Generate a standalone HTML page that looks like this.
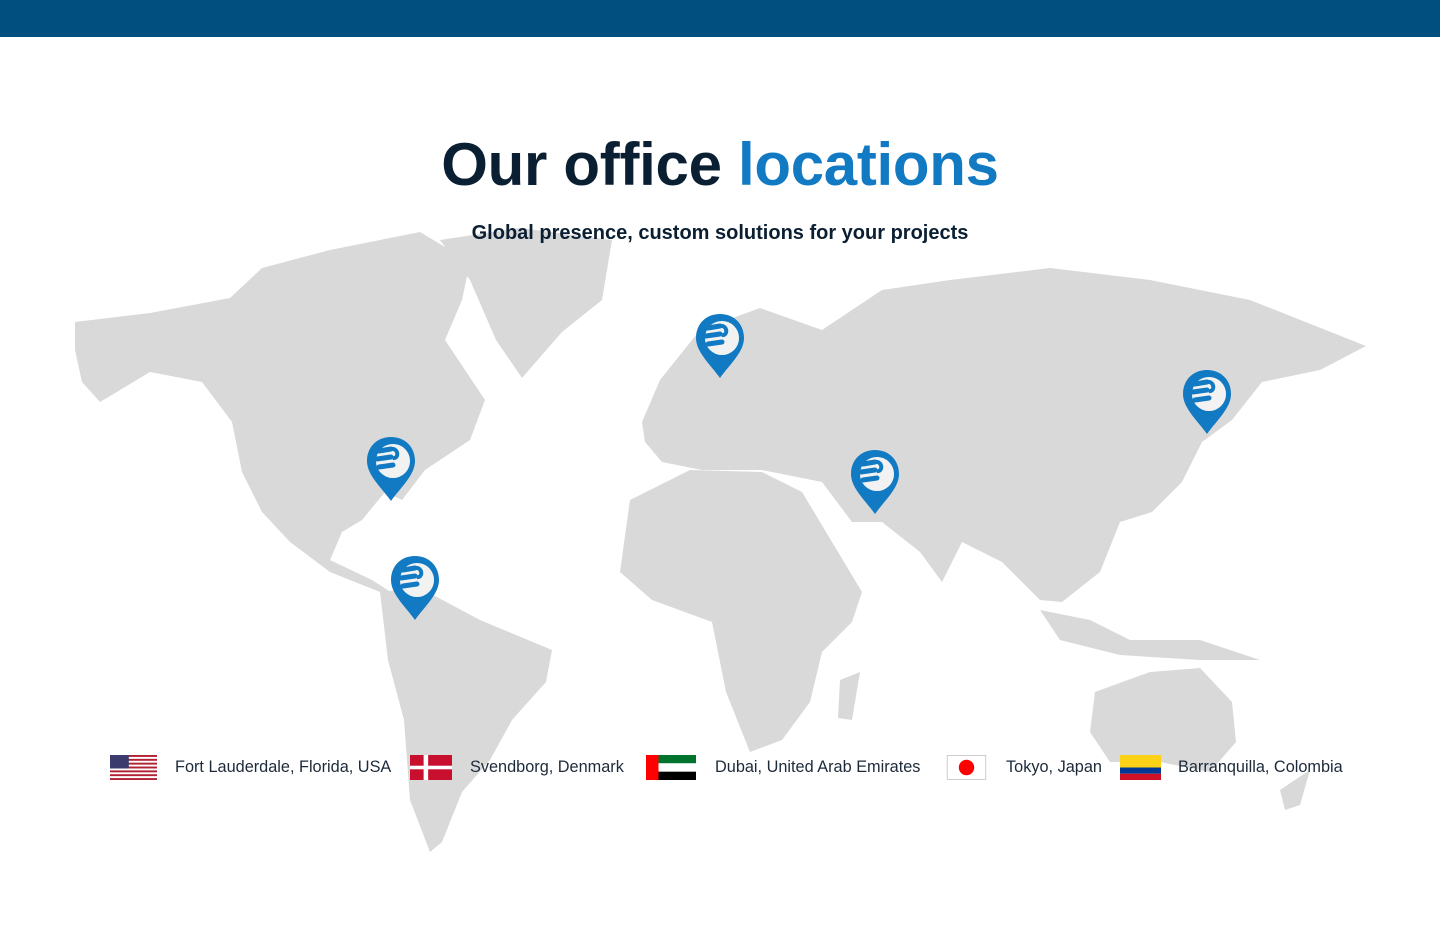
<!DOCTYPE html>
<html><head><meta charset="utf-8"><style>
*{margin:0;padding:0;box-sizing:border-box}
body{width:1440px;height:934px;background:#fff;position:relative;overflow:hidden;font-family:"Liberation Sans",sans-serif}
.top{position:absolute;left:0;top:0;width:1440px;height:37px;background:#014f7f}
h1{position:absolute;top:130px;left:0;width:1440px;text-align:center;font-size:60px;font-weight:700;color:#0b1f33;letter-spacing:-0.3px}
h1 span{color:#127ac2}
.sub{position:absolute;top:222px;left:0;width:1440px;text-align:center;font-size:20px;font-weight:700;color:#0b1f33}
svg.map{position:absolute;left:0;top:0}
.leg{position:absolute;top:754px;font-size:16.3px;color:#1d2a3a;line-height:26px}
.flag{position:absolute;top:755px;height:25px}
</style></head><body>
<div class="top"></div>
<svg class="map" width="1440" height="934" viewBox="0 0 1440 934">
<g fill="#d9d9d9">
<path d="M75 322 L150 313 L230 298 L262 268 L330 250 L420 232 L470 262 L462 300 L445 340 L485 400 L470 440 L425 470 L402 500 L385 492 L362 520 L342 532 L330 560 L372 580 L400 598 L380 592 L330 572 L290 542 L262 512 L242 472 L232 422 L202 382 L150 372 L100 402 L82 382 L75 350Z"/>
<path d="M440 240 L520 228 L612 240 L602 300 L562 332 L522 378 L496 340 L470 280Z"/>
<path d="M380 592 L420 588 L480 620 L552 650 L546 682 L512 720 L490 760 L462 792 L442 842 L430 852 L410 800 L404 720 L388 660Z"/>
<path d="M642 422 L660 380 L700 330 L760 308 L822 330 L882 290 L950 280 L1050 268 L1150 280 L1250 300 L1366 346 L1320 370 L1262 382 L1232 420 L1202 442 L1182 482 L1152 512 L1120 522 L1100 572 L1062 602 L1040 600 L1002 562 L962 542 L942 582 L920 552 L882 522 L852 522 L822 482 L762 470 L702 470 L662 462 L645 442Z"/>
<path d="M630 500 L690 470 L762 472 L802 492 L832 542 L862 592 L852 622 L822 652 L810 702 L782 740 L750 752 L726 692 L712 622 L652 600 L620 572Z"/>
<path d="M1095 692 L1150 672 L1200 668 L1232 702 L1236 742 L1210 772 L1160 762 L1110 762 L1090 732Z"/>
<path d="M1040 610 L1090 620 L1130 640 L1200 640 L1260 660 L1200 660 L1120 655 L1060 640Z"/>
<path d="M840 680 L860 672 L852 720 L838 718Z"/>
<path d="M1280 790 L1310 770 L1300 805 L1285 810Z"/>
</g>
<defs><g id="pin">
<path d="M0 -32 C-14 -32 -24 -22 -24 -8 C-24 6 -10 18 0 32 C10 18 24 6 24 -8 C24 -22 14 -32 0 -32Z" fill="#127ac2"/>
<circle cx="2" cy="-8" r="17" fill="#fff"/>
<circle cx="2" cy="-8" r="17" fill="#e6e6e6" opacity=".5"/>
<path d="M-12 -18 L0 -20 M-14 -10 L0 -12 M-12 -2 L2 -4" stroke="#127ac2" stroke-width="5" stroke-linecap="round"/>
<path d="M0 -20 C8 -21 8 -10 2 -11" stroke="#127ac2" stroke-width="4" fill="none"/>
</g></defs>
<use href="#pin" x="391" y="469"/>
<use href="#pin" x="720" y="346"/>
<use href="#pin" x="875" y="482"/>
<use href="#pin" x="1207" y="402"/>
<use href="#pin" x="415" y="588"/>
</svg>
<h1>Our office <span>locations</span></h1>
<div class="sub">Global presence, custom solutions for your projects</div>

<svg class="flag" style="left:110px" width="47" height="25" viewBox="0 0 13 7" preserveAspectRatio="none"><rect width="13" height="7" fill="#fff"/><g fill="#b22234"><rect y="0" width="13" height=".54"/><rect y="1.08" width="13" height=".54"/><rect y="2.15" width="13" height=".54"/><rect y="3.23" width="13" height=".54"/><rect y="4.31" width="13" height=".54"/><rect y="5.38" width="13" height=".54"/><rect y="6.46" width="13" height=".54"/></g><rect width="5.2" height="3.77" fill="#3c3b6e"/></svg>
<div class="leg" style="left:175px">Fort Lauderdale, Florida, USA</div>
<svg class="flag" style="left:410px" width="42" height="25" viewBox="0 0 37 28" preserveAspectRatio="none"><rect width="37" height="28" fill="#c8102e"/><rect x="12" width="4" height="28" fill="#fff"/><rect y="12" width="37" height="4" fill="#fff"/></svg>
<div class="leg" style="left:470px">Svendborg, Denmark</div>
<svg class="flag" style="left:646px" width="50" height="25" viewBox="0 0 12 6" preserveAspectRatio="none"><rect width="12" height="2" fill="#00732f"/><rect y="2" width="12" height="2" fill="#fff"/><rect y="4" width="12" height="2" fill="#000"/><rect width="3" height="6" fill="#f00"/></svg>
<div class="leg" style="left:715px">Dubai, United Arab Emirates</div>
<svg class="flag" style="left:946px" width="41" height="26" viewBox="0 0 41 26"><rect x=".5" y=".5" width="40" height="25" fill="#fff" stroke="#ccc"/><circle cx="20.5" cy="13" r="8" fill="#f00"/></svg>
<div class="leg" style="left:1006px">Tokyo, Japan</div>
<svg class="flag" style="left:1120px" width="41" height="27" viewBox="0 0 4 4" preserveAspectRatio="none"><rect width="4" height="2" fill="#fcd116"/><rect y="2" width="4" height="1" fill="#003893"/><rect y="3" width="4" height="1" fill="#ce1126"/></svg>
<div class="leg" style="left:1178px">Barranquilla, Colombia</div>
</body></html>
